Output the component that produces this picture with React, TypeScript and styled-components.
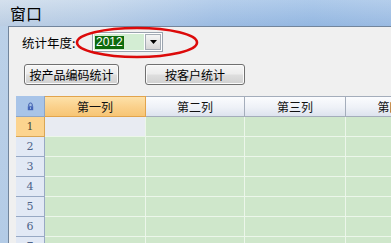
import React from 'react'
import styled, { createGlobalStyle } from 'styled-components'

const GlobalStyle = createGlobalStyle`
  body {
    margin: 0;
    font-family: "Noto Sans CJK SC", "Noto Sans", sans-serif;
  }
`

const columns = ['第一列', '第二列', '第三列', '第四列']
const rows = [1, 2, 3, 4, 5, 6, 7]

const App = () => {
  return (
    <Window>
      <GlobalStyle />
      <TitleBar>窗口</TitleBar>
      <Frame>
        <Client>
          <FilterRow>
            <Label>统计年度:</Label>
            <Combo>
              <ComboField>
                <Selected>2012</Selected>
              </ComboField>
              <DropButton>
                <svg width="7" height="4" viewBox="0 0 7 4">
                  <path d="M0 0H7L3.5 4Z" fill="#000" />
                </svg>
              </DropButton>
            </Combo>
          </FilterRow>
          <ButtonRow>
            <PushButton w={95}>按产品编码统计</PushButton>
            <PushButton w={100}>按客户统计</PushButton>
          </ButtonRow>
          <Sheet>
            <Corner>
              <svg width="7" height="9" viewBox="0 0 7 9">
                <path
                  d="M1.8 4.2V2.7C1.8 1.6 2.5 1 3.5 1S5.2 1.6 5.2 2.7V4.2"
                  fill="none"
                  stroke="#3553a8"
                  strokeWidth="1"
                />
                <rect x="0.8" y="4.2" width="5.4" height="4" fill="#4566b8" />
                <rect x="3" y="5.3" width="1" height="1.6" fill="#a8c4e8" />
              </svg>
            </Corner>
            {columns.map((c, i) => (
              <ColHeader key={c} active={i === 0}>
                {c}
              </ColHeader>
            ))}
            {rows.map((r) => (
              <React.Fragment key={r}>
                <RowHeader active={r === 1}>{r}</RowHeader>
                {columns.map((c, i) => (
                  <Cell key={c} current={r === 1 && i === 0} />
                ))}
              </React.Fragment>
            ))}
          </Sheet>
        </Client>
      </Frame>
      <Mark width="126" height="34" viewBox="0 0 126 34">
        <ellipse cx="62" cy="16.5" rx="60" ry="14.5" fill="none" stroke="#dc0a0a" strokeWidth="2.6" />
      </Mark>
    </Window>
  )
}

const Window = styled.div`
  position: relative;
  width: 391px;
  height: 243px;
  overflow: hidden;
  background: linear-gradient(180deg, #bcd1e8 0%, #b3cbe6 100%);
`

const TitleBar = styled.div`
  height: 26px;
  display: flex;
  align-items: center;
  padding-left: 10px;
  font-size: 16px;
  color: #000;
  background:
    linear-gradient(180deg, rgba(255, 255, 255, 0.15) 0%, rgba(60, 110, 180, 0.12) 100%),
    linear-gradient(90deg, #cddbea 0%, #c2d5ea 25%, #a9c6e8 55%, #a0c1e7 80%, #a7c5e8 100%);
`

const Frame = styled.div`
  display: flex;
  height: 217px;
  padding-left: 8px;
`

const Client = styled.div`
  flex: 1;
  min-width: 0;
  background: #f0f0f0;
  border-left: 1px solid #72859c;
  border-top: 1px solid #72859c;
  padding-left: 7px;
`

const FilterRow = styled.div`
  display: flex;
  align-items: center;
  margin-top: 5px;
  margin-left: 6px;
  height: 20px;
`

const Label = styled.span`
  width: 70px;
  font-size: 12.5px;
  color: #000;
  white-space: nowrap;
`

const Combo = styled.div`
  display: flex;
  align-items: stretch;
  box-sizing: border-box;
  width: 71px;
  height: 20px;
  border: 1px solid #9aa3ae;
  background: #fff;
  padding: 1px;
  gap: 1px;
`

const ComboField = styled.div`
  flex: 1;
  display: flex;
  align-items: center;
  background: #d3edd3;
  padding-left: 1px;
`

const Selected = styled.span`
  display: inline-block;
  background: #0d6b0d;
  color: #fff;
  font-family: "Liberation Sans", Arial, sans-serif;
  font-size: 12px;
  line-height: 13px;
  padding: 0 1px;
`

const DropButton = styled.div`
  width: 16px;
  display: flex;
  align-items: center;
  justify-content: center;
  box-sizing: border-box;
  border: 1px solid #a5acb5;
  background: linear-gradient(180deg, #f4f4f4 0%, #e6e6e6 50%, #d6d6d6 100%);
`

const ButtonRow = styled.div`
  display: flex;
  gap: 26px;
  margin-top: 12px;
  margin-left: 8px;
`

const PushButton = styled.div<{ w: number }>`
  width: ${(p) => p.w}px;
  height: 21px;
  box-sizing: border-box;
  display: flex;
  align-items: center;
  justify-content: center;
  border: 1px solid #707070;
  border-radius: 3px;
  background: linear-gradient(180deg, #f6f6f6 0%, #ececec 48%, #dedede 52%, #d0d0d0 100%);
  box-shadow: inset 0 0 0 1px #fbfbfb;
  font-size: 12px;
  color: #000;
  white-space: nowrap;
`

const Sheet = styled.div`
  display: grid;
  grid-template-columns: 29px 101px 99px 101px 100px;
  grid-template-rows: 21px;
  grid-auto-rows: 20px;
  margin-top: 11px;
  width: max-content;
`

const Corner = styled.div`
  box-sizing: border-box;
  display: flex;
  align-items: center;
  justify-content: center;
  background: #a8c4e8;
  border-right: 1px solid #8ea6c6;
  border-bottom: 1px solid #8ea6c6;
`

const ColHeader = styled.div<{ active?: boolean }>`
  box-sizing: border-box;
  display: flex;
  align-items: center;
  justify-content: center;
  font-size: 12px;
  color: #111;
  border-top: 1px solid ${(p) => (p.active ? '#e2a44c' : '#a4adbb')};
  border-right: 1px solid ${(p) => (p.active ? '#e2a44c' : '#a4adbb')};
  border-bottom: 1px solid ${(p) => (p.active ? '#e2a44c' : '#a4adbb')};
  background: ${(p) =>
    p.active
      ? 'linear-gradient(180deg, #fde1a9 0%, #fad08a 55%, #f7c575 100%)'
      : 'linear-gradient(180deg, #fbfcfe 0%, #eef1f7 55%, #dde3ee 100%)'};
`

const RowHeader = styled.div<{ active?: boolean }>`
  box-sizing: border-box;
  display: flex;
  align-items: center;
  justify-content: center;
  font-family: "DejaVu Serif", "Liberation Serif", serif;
  font-size: 11px;
  color: ${(p) => (p.active ? '#4a4a3a' : '#4e648a')};
  background: ${(p) => (p.active ? '#fcd48f' : '#e2e9f5')};
  border-right: 1px solid ${(p) => (p.active ? '#d9a655' : '#98a9c4')};
  border-bottom: 1px solid ${(p) => (p.active ? '#d9a655' : '#98a9c4')};
`

const Cell = styled.div<{ current?: boolean }>`
  box-sizing: border-box;
  background: ${(p) => (p.current ? '#e8ebf2' : '#cfe7cb')};
  border-right: 1px solid #ecf6ea;
  border-bottom: 1px solid #ecf6ea;
`

const Mark = styled.svg`
  position: absolute;
  left: 75px;
  top: 26px;
  pointer-events: none;
`

export default App
